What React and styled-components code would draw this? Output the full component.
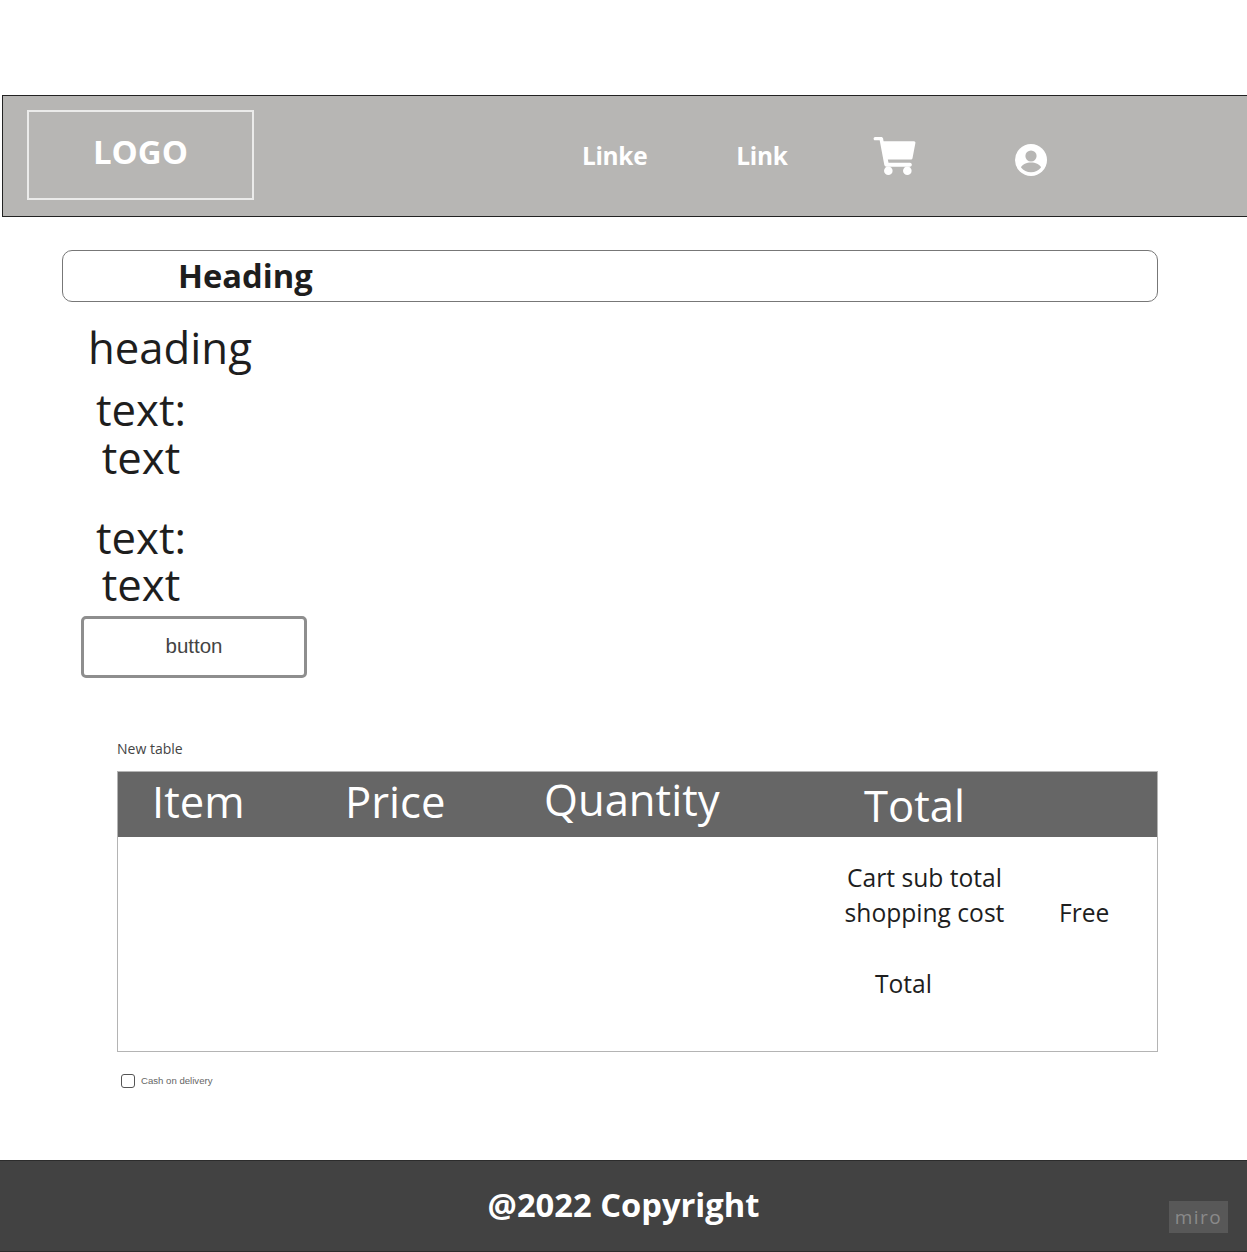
import React from "react";
import styled, { createGlobalStyle } from "styled-components";

const GlobalStyle = createGlobalStyle`
  html, body {
    margin: 0;
    padding: 0;
    background: #fff;
  }
  * { box-sizing: border-box; }
`;

const Page = styled.div`
  position: relative;
  width: 1247px;
  height: 1252px;
  overflow: hidden;
  padding-top: 95px;
  font-family: "Open Sans", sans-serif;
  color: #1e1e1e;
  display: flex;
  flex-direction: column;
`;

const Header = styled.header`
  height: 122px;
  margin-left: 2px;
  background: #b7b6b4;
  border: 1px solid #222;
  border-right: none;
  display: flex;
  align-items: flex-start;
  padding: 14px 0 0 24px;
  color: #fff;
`;

const Logo = styled.div`
  width: 227px;
  height: 90px;
  border: 2px solid #ebebea;
  font-size: 33px;
  font-weight: 700;
  line-height: 80px;
  text-align: center;
`;

const Nav = styled.nav`
  display: flex;
  align-items: center;
  margin-left: 328px;
  height: 90px;
`;

const NavLink = styled.a`
  font-size: 24.4px;
  font-weight: 700;
  letter-spacing: -0.3px;
  margin-right: ${(p) => p.$gap}px;
  margin-top: 1px;
`;

const CartIcon = styled.svg`
  width: 43px;
  height: 38px;
  fill: #fff;
  margin-top: 1px;
  margin-right: 99px;
`;

const UserIcon = styled.svg`
  width: 32px;
  height: 32px;
  margin-top: 10px;
`;

const Main = styled.main`
  padding: 33px 0 0 62px;
`;

const HeadingBar = styled.div`
  width: 1096px;
  height: 52px;
  border: 1px solid #777;
  border-radius: 10px;
  padding-left: 115px;
  font-size: 32.7px;
  font-weight: 700;
  line-height: 50px;
`;

const SubHeading = styled.h2`
  margin: 15px 0 0 26px;
  font-size: 43.7px;
  font-weight: 400;
  line-height: 60px;
`;

const Detail = styled.div`
  width: 158px;
  margin: ${(p) => p.$top}px 0 0 0;
  font-size: 43.7px;
  line-height: ${(p) => p.$line}px;
  text-align: center;
`;

const Button = styled.button`
  display: block;
  width: 226px;
  height: 62px;
  margin: 8px 0 0 19px;
  padding: 0 0 2px;
  background: #fff;
  border: 3px solid #8e8e8e;
  border-radius: 5px;
  font-family: "Liberation Sans", Arial, sans-serif;
  font-size: 20.5px;
  color: #444;
`;

const TableTitle = styled.div`
  margin: 61px 0 0 55px;
  font-size: 14px;
  line-height: 19px;
  color: #444;
`;

const Table = styled.section`
  width: 1041px;
  height: 281px;
  margin: 13px 0 0 55px;
  border: 1px solid #b4b4b4;
`;

const TableHead = styled.div`
  height: 65px;
  background: #666;
  color: #fff;
  display: grid;
  grid-template-columns: 193px 199px 320px 1fr;
  padding-left: 34px;
`;

const HeadCell = styled.div`
  font-size: 43.6px;
  line-height: 60px;
  margin-top: ${(p) => p.$top}px;
`;

const TableBody = styled.div`
  display: grid;
  grid-template-columns: 215px 98px;
  grid-template-rows: 35px 35px 36px 35px;
  column-gap: 27px;
  justify-content: end;
  padding-top: 23px;
  font-size: 24.6px;
  line-height: 35px;
`;

const SummaryLabel = styled.div`
  grid-column: 1;
  grid-row: ${(p) => p.$row};
  text-align: center;
  white-space: nowrap;
`;

const SummaryTotal = styled(SummaryLabel)`
  text-align: left;
  padding-left: 58px;
`;

const SummaryValue = styled.div`
  grid-column: 2;
  grid-row: ${(p) => p.$row};
`;

const Delivery = styled.label`
  display: flex;
  align-items: center;
  gap: 6px;
  margin: 22px 0 0 59px;
  font-family: "Liberation Sans", Arial, sans-serif;
  font-size: 9.6px;
  line-height: 12px;
  color: #666;
`;

const Check = styled.span`
  width: 14px;
  height: 14px;
  border: 1.5px solid #555;
  border-radius: 3px;
`;

const Footer = styled.footer`
  position: absolute;
  left: 0;
  right: 0;
  bottom: 0;
  height: 92px;
  background: #424242;
  border-top: 1px solid #2c2c2c;
  border-bottom: 1px solid #2c2c2c;
  color: #fff;
  font-size: 32.7px;
  font-weight: 700;
  line-height: 88px;
  text-align: center;
`;

const Watermark = styled.div`
  position: absolute;
  right: 19px;
  bottom: 18px;
  width: 59px;
  height: 32px;
  background: #585858;
  color: #8a8a8a;
  font-size: 19px;
  font-weight: 400;
  letter-spacing: 1.5px;
  line-height: 32px;
  text-align: center;
`;

export default function App() {
  return (
    <Page>
      <GlobalStyle />
      <Header>
        <Logo>LOGO</Logo>
        <Nav>
          <NavLink $gap={89}>Linke</NavLink>
          <NavLink $gap={86}>Link</NavLink>
          <CartIcon viewBox="0 0 44 40">
            <path d="M1.5 0h6.500c1 0 1.800.6 2 1.600L10.500 4.500H42.500c1 0 1.700.9 1.500 1.900l-3 15.700c-.2 1-1 1.700-2 1.700H15l.7 3.400h22.600c1.200 0 2.100 1.100 1.900 2.300-.2 1-1 1.700-2 1.700H13.300c-1 0-1.800-.7-2-1.600L6.400 3.500H1.500C.7 3.500 0 2.700 0 1.800S.7 0 1.500 0z" />
            <circle cx="15.500" cy="35.500" r="4.500" />
            <circle cx="35.500" cy="35.500" r="4.500" />
          </CartIcon>
          <UserIcon viewBox="0 0 32 32">
            <circle cx="16" cy="16" r="16" fill="#fff" />
            <circle cx="16" cy="12" r="5.600" fill="#b7b6b4" />
            <path d="M6 23.500c1.500-3.300 5.500-5 10-5s8.500 1.700 10 5c-2.300 3-6 4.700-10 4.700s-7.700-1.700-10-4.700z" fill="#b7b6b4" />
          </UserIcon>
        </Nav>
      </Header>
      <Main>
        <HeadingBar>Heading</HeadingBar>
        <SubHeading>heading</SubHeading>
        <Detail $top={8} $line={48}>
          text:
          <br />
          text
        </Detail>
        <Detail $top={33} $line={47}>
          text:
          <br />
          text
        </Detail>
        <Button>button</Button>
        <TableTitle>New table</TableTitle>
        <Table>
          <TableHead>
            <HeadCell $top={-1}>Item</HeadCell>
            <HeadCell $top={-1}>Price</HeadCell>
            <HeadCell $top={-3}>Quantity</HeadCell>
            <HeadCell $top={3}>Total</HeadCell>
          </TableHead>
          <TableBody>
            <SummaryLabel $row={1}>Cart sub total</SummaryLabel>
            <SummaryLabel $row={2}>shopping cost</SummaryLabel>
            <SummaryValue $row={2}>Free</SummaryValue>
            <SummaryTotal $row={4}>Total</SummaryTotal>
          </TableBody>
        </Table>
        <Delivery>
          <Check />
          Cash on delivery
        </Delivery>
      </Main>
      <Footer>
        @2022 Copyright
        <Watermark>miro</Watermark>
      </Footer>
    </Page>
  );
}
